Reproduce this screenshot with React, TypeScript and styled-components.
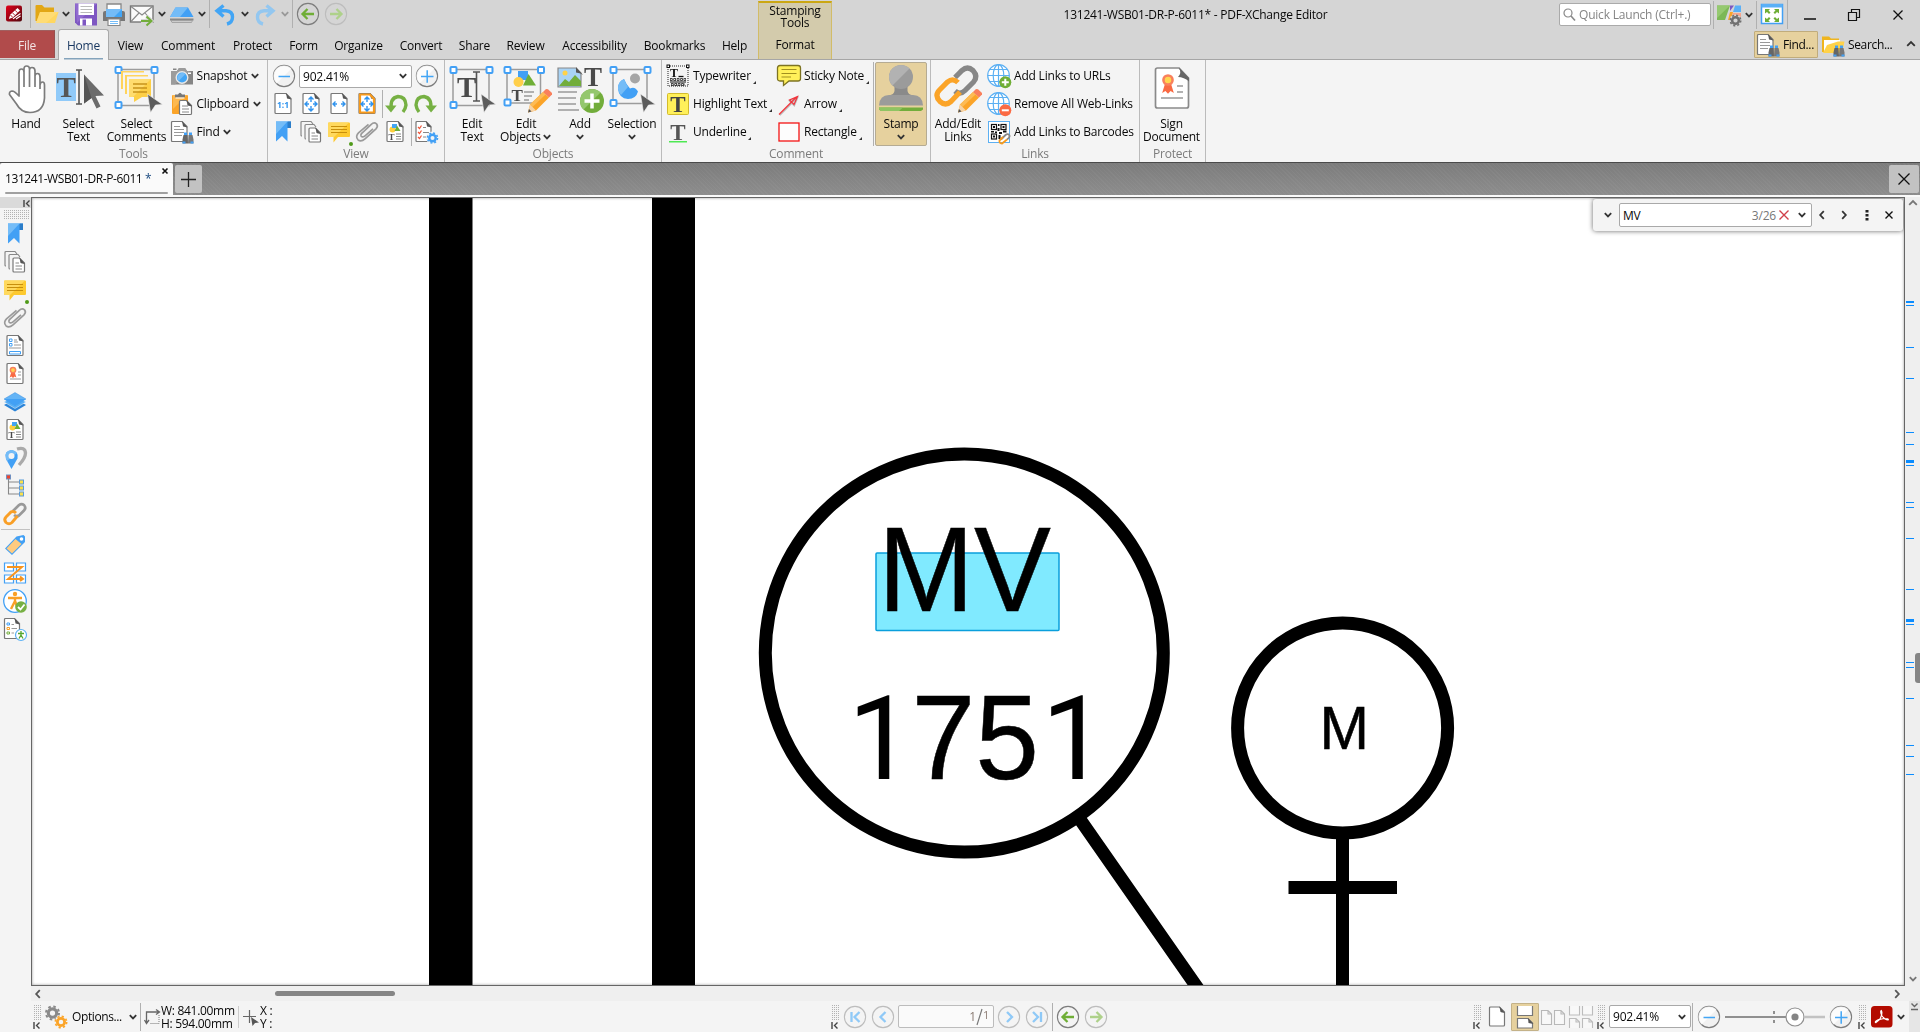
import React from "react";
import styled, { createGlobalStyle, css } from "styled-components";

const GlobalStyle = createGlobalStyle`
  *, *::before, *::after { box-sizing: border-box; }
  body { margin: 0; overflow: hidden; background: #f4f4f4; }
  #root {
    font-family: "Open Sans", "Noto Sans", sans-serif;
    font-size: 12px;
    line-height: 13px;
    letter-spacing: -0.2px;
    color: #080808;
  }
`;

/* ---------- shared parts ---------- */

const Window = styled.div`
  width: 1920px;
  height: 1032px;
  display: flex;
  flex-direction: column;
  background: #f4f4f4;
  white-space: nowrap;
  overflow: hidden;
`;

const Svg = styled.svg`
  display: block;
  flex: none;
  overflow: visible;
`;

const VRule = styled.i<{ $h?: number; $c?: string; $l?: number; $r?: number }>`
  flex: none;
  width: 1px;
  height: ${(p) => p.$h ?? 28}px;
  margin-left: ${(p) => p.$l ?? 0}px;
  margin-right: ${(p) => p.$r ?? 0}px;
  background: ${(p) => p.$c ?? "#b0b0b0"};
`;

const Spacer = styled.i<{ $w?: number }>`
  flex: ${(p) => (p.$w === undefined ? "1 1 0" : "none")};
  width: ${(p) => (p.$w === undefined ? "auto" : `${p.$w}px`)};
`;

type IconProps = { s?: number };

const I = ({ s = 24, w, h, children }: IconProps & { w?: number; h?: number; children: React.ReactNode }) => (
  <Svg width={w ?? s} height={h ?? s} viewBox={`0 0 ${w ?? s} ${h ?? s}`} fill="none">
    {children}
  </Svg>
);

const Chevron = ({ c = "#333", d = "down" }: { c?: string; d?: "down" | "up" | "left" | "right" }) => {
  const pts = {
    down: "1.8,3.2 5,6.4 8.2,3.2",
    up: "1.2,6.8 5,3 8.8,6.8",
    left: "6.8,1.2 3.2,5 6.8,8.8",
    right: "3.2,1.2 6.8,5 3.2,8.8",
  }[d];
  return (
    <I s={10}>
      <polyline points={pts} stroke={c} strokeWidth="1.8" />
    </I>
  );
};

const Cross = ({ s = 10, c = "#111", w = 1.4 }: { s?: number; c?: string; w?: number }) => (
  <I s={s}>
    <path d={`M0.5 0.5L${s - 0.5} ${s - 0.5}M${s - 0.5} 0.5L0.5 ${s - 0.5}`} stroke={c} strokeWidth={w} />
  </I>
);

/* ---------- 24px icons ---------- */

const PageShape = ({ x = 4, y = 1.5, w = 16, h = 20 }: { x?: number; y?: number; w?: number; h?: number }) => (
  <>
    <path
      d={`M${x + 1} ${y}H${x + w - 5}L${x + w} ${y + 5}V${y + h - 1}Q${x + w} ${y + h} ${x + w - 1} ${y + h}H${x + 1}Q${x} ${y + h} ${x} ${y + h - 1}V${y + 1}Q${x} ${y} ${x + 1} ${y}Z`}
      fill="#fff"
      stroke="#777"
      strokeWidth="1.2"
    />
    <path d={`M${x + w - 5} ${y - 0.5}L${x + w + 0.6} ${y + 6}L${x + w - 4} ${y + 5}Z`} fill="#555" />
  </>
);

const Glass = ({ x = 0, y = 0 }: { x?: number; y?: number }) => (
  <g transform={`translate(${x} ${y})`}>
    <rect x="1.5" y="0" width="3" height="3" fill="#42a0f5" />
    <rect x="6.5" y="0" width="3" height="3" fill="#42a0f5" />
    <path d="M1 2.5H5L5.5 11H0V7Z" fill="#666" />
    <path d="M6 2.5H10L11 7V11H5.5Z" fill="#777" />
    <rect x="0" y="9" width="3" height="2" fill="#42a0f5" />
    <rect x="8" y="9" width="3" height="2" fill="#42a0f5" />
  </g>
);

const LogoIcon = () => (
  <I>
    <defs>
      <linearGradient id="logo" x1="0" y1="0" x2="1" y2="1">
        <stop offset="0" stopColor="#e2001a" />
        <stop offset="1" stopColor="#50080e" />
      </linearGradient>
    </defs>
    <rect x="4" y="3.5" width="16" height="16" rx="2" fill="url(#logo)" />
    <path d="M6.800 17L8.200 12.800L15.500 6L18 8.600L10.800 15.500Z" fill="#fff" />
    <path d="M8.500 13L10.600 15.200M10.500 10.800L12.800 13.200M13.200 8.300L15.500 10.800" stroke="#a80c18" strokeWidth=".9" />
    <path d="M11 16.800L18.500 11.500M14 17L18.500 14" stroke="#fff" strokeWidth="1.100" />
  </I>
);
const FolderIcon = () => (
  <I>
    <path d="M1.5 4Q1.5 3 2.500 3H8L10.500 5.500H20V19H1.500Z" fill="#e2a716" />
    <path d="M2 21L6 10H24.500L21 21Z" fill="#ffd761" />
    <path d="M2 21L6 10H24.500L12 21Z" fill="#ffe082" opacity=".6" />
  </I>
);
const SaveIcon = () => (
  <I>
    <path d="M1 1.500H23V23.500H4L1 20.500Z" fill="#7e57c2" />
    <path d="M1 1.500H23L3 21Z" fill="#a47fdb" opacity=".5" />
    <rect x="4.500" y="1.500" width="15.500" height="11.500" fill="#fff" />
    <path d="M6.500 4.500H18M6.500 7.500H18M6.500 10.500H18" stroke="#bbb" />
    <rect x="6" y="16.500" width="12" height="7" fill="#fff" />
    <rect x="8.500" y="17.500" width="3.500" height="6" fill="#7e57c2" />
  </I>
);
const PrintIcon = () => (
  <I>
    <path d="M5 10V2H19V10" fill="#fff" stroke="#888" strokeWidth="1.300" />
    <path d="M3 9H21Q23 9 23 11V19H1V11Q1 9 3 9Z" fill="#777" />
    <path d="M4 7H20V15H4Z" fill="#42a5f5" />
    <path d="M4 7H20L12 15H4Z" fill="#74bcf7" />
    <path d="M6 17H18V23.500H6Z" fill="#fff" stroke="#888" strokeWidth="1.200" />
    <path d="M8 19.500H16M8 21.500H16" stroke="#74bcf7" />
  </I>
);
const MailIcon = () => (
  <I>
    <rect x=".5" y="4" width="22.500" height="16" fill="#fafafa" stroke="#777" strokeWidth="1.400" />
    <path d="M1 4.500L12 13L22.500 4.500M1 19.500L9 11M22.500 19.500L15 11" stroke="#888" strokeWidth="1.100" />
    <path d="M11 19H21M16.500 14.500L21.500 19L16.500 23.500" stroke="#d5d5d5" strokeWidth="4" />
    <path d="M11 19H21M16.500 14.500L21.500 19L16.500 23.500" stroke="#72ad3b" strokeWidth="2" />
  </I>
);
const ScannerIcon = () => (
  <I>
    <path d="M5.500 5.500H18L23.500 15H0Z" fill="#42a0f5" />
    <path d="M5.500 5.500H18L10 15H0Z" fill="#74bcf7" />
    <path d="M0 16.500H23.500V18.500H0Z" fill="#888" />
    <path d="M1 18.500H22.500L21.500 20.500H2Z" fill="#ccc" stroke="#999" strokeWidth=".8" />
  </I>
);
const UndoIcon = ({ flip, c }: { flip?: boolean; c: string }) => (
  <I>
    <g transform={flip ? "translate(24 0) scale(-1 1)" : undefined}>
      <path d="M10.500 3.500L4 8.800L10.500 14.500M4 8.800H13Q19.500 9.200 19.500 15Q19.500 20.500 14 22" stroke={c} strokeWidth="3.400" />
    </g>
  </I>
);
const RoundIcon = ({ kind, off, c }: { kind: "left" | "right" | "minus" | "plus" | "first" | "prev" | "next" | "last"; off?: boolean; c?: string }) => {
  const green = kind === "left" || kind === "right";
  const col = c ?? (green ? (off ? "#aed18a" : "#6fae36") : off ? "#8fc9f7" : "#42a5f5");
  const d = {
    left: "M6.500 12H18M11.500 7L6.500 12L11.500 17",
    right: "M6 12H17.500M12.500 7L17.500 12L12.500 17",
    minus: "M6.500 12.500H18",
    plus: "M6 12.500H18.500M12.200 6.200V18.700",
    first: "M8.500 7V17M16.500 7L11.500 12L16.500 17",
    prev: "M14.500 7L9.500 12L14.500 17",
    next: "M10 7L15 12L10 17",
    last: "M8 7L13 12L8 17M16 7V17",
  }[kind];
  return (
    <I>
      <circle cx="12" cy="12" r="10.600" fill={green || off ? "none" : "#f1f1f1"} stroke={off ? "#bdbdbd" : "#7d7d7d"} strokeWidth="1.100" />
      {!green && !off && <path d="M4.500 4.500A10.600 10.600 0 0 0 4.500 19.500L19.500 4.500A10.600 10.600 0 0 0 4.500 4.500Z" fill="#fff" opacity=".8" />}
      <path d={d} stroke={col} strokeWidth={kind === "minus" || kind === "plus" ? 1.5 : 2.3} />
    </I>
  );
};
const CameraIcon = () => (
  <I>
    <path d="M1 7H7L9 4H15L17 7H23V20.500H1Z" fill="#858585" />
    <path d="M1 7H7L9 4H15L17 7H20L5 20.500H1Z" fill="#9c9c9c" />
    <rect x="3" y="4.500" width="3.500" height="1.500" fill="#858585" />
    <rect x="18" y="8.500" width="3" height="1.500" fill="#fff" />
    <circle cx="12" cy="13.500" r="5.800" fill="#42a5f5" stroke="#e8e8e8" strokeWidth="1.400" />
    <path d="M8.500 17A5 5 0 0 1 15.500 10Z" fill="#74bcf7" />
  </I>
);
const ClipboardIcon = () => (
  <I>
    <rect x="2" y="3" width="16" height="19" rx="1" fill="#fba428" />
    <path d="M3 3H17L3 17Z" fill="#fdb94f" />
    <path d="M5 2.500H8Q10 -1 12 2.500H15V5.500H5Z" fill="#777" />
    <rect x="5.500" y="5.500" width="9" height="1" fill="#fff" />
    <PageShape x={9.5} y={8.5} w={12} h={14} />
    <path d="M12 14H18M12 17H19M12 20H19" stroke="#888" />
  </I>
);
const FindIcon = () => (
  <I>
    <PageShape x={1.5} y={1.5} w={15.500} h={20} />
    <path d="M4 6.500H10M4 9.500H14M4 12.500H14M4 15.500H12" stroke="#999" />
    <Glass x={12.500} y={12.500} />
  </I>
);
const SearchFolderIcon = () => (
  <I>
    <path d="M1 3.500H8L10 5.500H18V19H1Z" fill="#efb51f" />
    <path d="M3 7H19V18H3Z" fill="#fff" />
    <path d="M2 20L6 12L17 8.500H23.500L21 20Z" fill="#ffd24a" />
    <Glass x={12.500} y={12.500} />
  </I>
);

const Arrows4 = ({ v = true }: { v?: boolean }) => (
  <path
    d={`M8.500 9.500L6 12L8.500 14.500M15.500 9.500L18 12L15.500 14.500M6 12H10M14 12H18${v ? "M9.500 7.500L12 5L14.500 7.500M9.500 16.500L12 19L14.500 16.500M12 5V10M12 14V19" : ""}`}
    stroke="#2f93ee"
    strokeWidth="1.400"
  />
);
const TinyText = styled.text<{ $size: number; $bold?: boolean; $serif?: boolean; $fill?: string }>`
  font-family: ${(p) => (p.$serif ? '"Liberation Serif", serif' : '"Open Sans", sans-serif')};
  font-size: ${(p) => p.$size}px;
  font-weight: ${(p) => (p.$bold ? 700 : 400)};
  fill: ${(p) => p.$fill ?? "#4a4a4a"};
  letter-spacing: 0;
`;
const ActualSizeIcon = () => (
  <I>
    <PageShape />
    <TinyText x="6" y="15.500" $size={8.5} $bold $fill="#2f93ee">1:1</TinyText>
  </I>
);
const FitPageIcon = () => (<I><PageShape /><Arrows4 /></I>);
const FitWidthIcon = () => (<I><PageShape /><Arrows4 v={false} /></I>);
const FitVisibleIcon = () => (
  <I>
    <PageShape />
    <path d="M5 2.500H15L19 7V20.500H5Z" stroke="#f79a1c" strokeWidth="2.200" />
    <Arrows4 />
  </I>
);
const RotateIcon = ({ flip }: { flip?: boolean }) => (
  <I>
    <g transform={flip ? "translate(24 0) scale(-1 1)" : undefined}>
      <path d="M6.500 17.500Q4.500 6 13 4.500Q20.500 4.500 21 13Q20.500 17 18 20" stroke="#76b043" strokeWidth="3.400" />
      <path d="M0 13.500H11.500L6 20.500Z" fill="#76b043" />
    </g>
  </I>
);
const BookmarkIcon = () => (
  <I>
    <path d="M5 1.500H20V8H16.500V21.500L11 16L5 21.500Z" fill="#42a0f5" />
    <path d="M16.500 1.500H20V8H16.500Z" fill="#2b7dc9" />
    <path d="M5 1.500H16.500L5 14Z" fill="#74bcf7" />
  </I>
);
const PagesIcon = () => (
  <I>
    <path d="M3 16Q2 16 2 15V2.500Q2 1.500 3 1.500H12L14 4M7 19Q6 19 6 18V5.500Q6 4.500 7 4.500H15L17 7" stroke="#888" strokeWidth="1.200" />
    <PageShape x={10} y={8} w={11.500} h={14} />
    <path d="M12.500 13H16M12.500 16H19M12.500 19H19" stroke="#888" />
  </I>
);
const NoteIcon = () => (
  <I>
    <path d="M1 3.500Q1 2.500 2 2.500H22Q23 2.500 23 3.500V16Q23 17 22 17H11L6.500 22.500V17H2Q1 17 1 16Z" fill="#fdc92f" />
    <path d="M1 3.500Q1 2.500 2 2.500H22L7 17H2Q1 17 1 16Z" fill="#ffd95e" />
    <path d="M4 6.500H20M4 9.500H20M4 12.500H20" stroke="#c78f0c" strokeWidth="1.100" />
    <circle cx="24" cy="24" r="2" fill="#4f9a18" />
  </I>
);
const ClipIcon = () => (
  <I>
    <path
      d="M18 9L9.500 16.500Q7 18 6 16Q5.500 14.500 7 13.200L16 4.800Q19 2 21.500 4Q23.500 6.500 21 9L10 19Q6 22.500 3 20Q0 16.500 3.500 13L13.500 4.500"
      stroke="#9a9a9a"
      strokeWidth="1.700"
      transform="translate(0 -.2)"
    />
  </I>
);
const ContentIcon = () => (
  <I>
    <PageShape />
    <circle cx="9.500" cy="9.500" r="3" fill="#fdcf3f" />
    <rect x="9" y="4" width="5" height="4" fill="#42a5f5" />
    <path d="M14 5.500L17.500 11H11.500Z" fill="#6fae36" />
    <TinyText x="5.500" y="19.500" $size={9} $bold $serif>T</TinyText>
    <path d="M13 14H18M13 16.500H18M13 19H18" stroke="#888" />
  </I>
);
const Gear = ({ cx, cy, r, c }: { cx: number; cy: number; r: number; c: string }) => (
  <g>
    <circle cx={cx} cy={cy} r={r * 0.56} stroke={c} strokeWidth={r * 0.42} fill="none" />
    <circle cx={cx} cy={cy} r={r * 0.87} stroke={c} strokeWidth={r * 0.26} strokeDasharray={`${r * 0.3416} ${r * 0.3416}`} fill="none" />
  </g>
);
const ViewSettingsIcon = () => (
  <I>
    <PageShape x={2} y={1.5} w={15} h={20} />
    <path d="M4 7L5.500 8.500L7.500 5.500M4 12L5.500 13.500L7.500 10.500M4 17L5.500 18.500L7.500 15.500" stroke="#f0563a" strokeWidth="1.200" />
    <path d="M9 7.500H12M9 12.500H15M9 17H12" stroke="#888" />
    <circle cx="18.500" cy="18" r="6.500" fill="#f4f4f4" />
    <Gear cx={18.5} cy={18} r={5.8} c="#42a0f5" />
  </I>
);
const TypewriterIcon = () => (
  <I>
    <rect x="2" y="2" width="20" height="20" stroke="#222" strokeWidth="1" strokeDasharray="1 1" />
    <rect x="1" y="1" width="2.500" height="2.500" fill="#fff" stroke="#111" />
    <rect x="20.500" y="1" width="2.500" height="2.500" fill="#fff" stroke="#111" />
    <TinyText x="4" y="13" $size={12} $bold $serif $fill="#111">T</TinyText>
    <path d="M12.500 12.500H17.500" stroke="#111" strokeWidth="1.300" />
    <path d="M4 15.500H20M5 20.500H19" stroke="#111" strokeWidth="2.600" strokeDasharray="2.600 .8" />
    <path d="M4.600 15.500H19.500M5.600 20.500H18.500" stroke="#fff" strokeWidth=".9" strokeDasharray="1.300 2.100" />
    <path d="M4 18H20" stroke="#111" strokeWidth="1" />
  </I>
);
const HighlightIcon = () => (
  <I>
    <rect x="1.500" y="1.500" width="21" height="21" rx="1" fill="#fff05a" stroke="#d3bb2c" />
    <TinyText x="4.300" y="19.500" $size={23} $bold $serif $fill="#444">T</TinyText>
  </I>
);
const UnderlineIcon = () => (
  <I>
    <TinyText x="4.300" y="19.500" $size={23} $bold $serif $fill="#555">T</TinyText>
    <path d="M3 21.800H21" stroke="#25e62b" strokeWidth="1.200" />
  </I>
);
const StickyIcon = () => (
  <I>
    <path d="M3 1.500H21Q23.500 1.500 23.500 4V14.500Q23.500 17 21 17H12L6.500 21.500V17H3Q.5 17 .5 14.500V4Q.5 1.500 3 1.500Z" fill="#fff05a" stroke="#7d7322" strokeWidth="1.300" />
    <path d="M4.500 5.500H19.500M4.500 9.500H19.500M4.500 13H14" stroke="#a08f1e" />
  </I>
);
const ArrowIcon = () => (
  <I>
    <path d="M2 22.500L20 4.500M20 4.500L11.500 8L16.500 13Z" stroke="#bbb" strokeWidth="1.400" transform="translate(.8 .8)" />
    <path d="M2 22.500L19.500 5M20.500 4.500L12.500 8L17 12.500Z" stroke="#f2323a" strokeWidth="1.200" />
  </I>
);
const RectIcon = () => (
  <I><rect x="2" y="3" width="20" height="18" fill="#fdfdfd" stroke="#f51414" strokeWidth="1.300" /></I>
);
const Globe = () => (
  <>
    <circle cx="11.500" cy="11.500" r="10.800" fill="#fff" />
    <g stroke="#5cb0f3" strokeWidth="1.200">
      <circle cx="11.500" cy="11.500" r="10.800" />
      <ellipse cx="11.500" cy="11.500" rx="5.300" ry="10.800" />
      <path d="M11.500 .7V22.300M.7 11.500H22.300M2.500 5.500H20.500M2.500 17.500H20.500" />
    </g>
  </>
);
const GlobeAddIcon = () => (
  <I>
    <Globe />
    <circle cx="18.300" cy="18.300" r="6" fill="#6fae36" />
    <path d="M18.300 14.800V21.800M14.800 18.300H21.800" stroke="#fff" strokeWidth="2" />
  </I>
);
const GlobeRemoveIcon = () => (
  <I>
    <Globe />
    <circle cx="18.300" cy="18.300" r="6" fill="#fb6a43" />
    <path d="M14.800 18.300H21.800" stroke="#fff" strokeWidth="2" />
  </I>
);
const QrIcon = () => (
  <I>
    <rect x="1.500" y="1.500" width="21" height="21" fill="#fff" stroke="#5cb0f3" />
    <g stroke="#111" strokeWidth="1.200">
      <rect x="4.500" y="4.500" width="5" height="5" />
      <rect x="14" y="4.500" width="5" height="5" />
      <rect x="4.500" y="14" width="5" height="5" />
    </g>
    <g fill="#111">
      <path d="M6 6h2v2h-2zM15.500 6h2v2h-2zM6 15.500h2v2h-2zM11 4h1.500v2h-1.500zM10.500 8h2v3h-2zM4 11h3v1.500h-3zM8 11.500h2v1.500h-2zM12 12h3v2h-3zM16 10.500h3.500v2h-3.500zM11.500 15h2v4h-2z" />
    </g>
    <path d="M14 19.500L18.500 15Q21 13 22.500 15.500Q23 17.500 20 19.500" stroke="#888" strokeWidth="1.800" />
    <path d="M16 17L12.500 20.500Q12 23.500 15 23.500L20 19.500" stroke="#f79a1c" strokeWidth="1.800" />
  </I>
);
const LinkIcon = () => (
  <I>
    <path d="M10 9L16 3Q18.500 1.200 21 3Q23.500 6 21 8.500L16 13.500Q13.500 15 11 13" stroke="#999" strokeWidth="2.700" />
    <path d="M14.500 14L9 20.500Q6 23 3 20.500Q.5 17.500 3 15L8 10Q10.500 8.500 13 11" stroke="#f99f26" strokeWidth="2.900" />
  </I>
);
const FieldsIcon = () => (
  <I>
    <PageShape />
    <path d="M6.500 5H9V7.500H6.500ZM6.500 9.500H9V12H6.500ZM6.500 17.500H17.500V20H6.500Z" stroke="#42a0f5" />
    <path d="M11 6H14M11 8H15M11 11H18M6 14H18" stroke="#999" />
  </I>
);
const Rosette = ({ x, y, k = 1 }: { x: number; y: number; k?: number }) => (
  <g transform={`translate(${x} ${y}) scale(${k})`}>
    <path d="M-2 2L-4.500 10L-2 8.500L0 10.500L2 8.500L4.500 10L2 2Z" fill="#f96a43" />
    <circle r="3.500" fill="#ffd54f" stroke="#f9805c" strokeWidth="2" />
  </g>
);
const SignatureIcon = () => (
  <I>
    <PageShape />
    <Rosette x={10} y={8} k={0.75} />
    <path d="M15 10H18M15 13H18M7 17H18" stroke="#999" />
  </I>
);
const LayersIcon = () => (
  <I>
    <path d="M12 9L23 15L12 21.500L1 15Z" fill="#2b84d8" />
    <path d="M12 6L23 12L12 18.500L1 12Z" fill="#55aef7" stroke="#f4f4f4" strokeWidth=".5" />
    <path d="M12 2.500L23 9L12 15.500L1 9Z" fill="#64b4f6" stroke="#2b84d8" strokeWidth=".4" />
    <path d="M23 9L12 15.500L1 9Z" fill="#42a0f5" />
  </I>
);
const PinsIcon = () => (
  <I>
    <path d="M14 3Q22 .5 22.500 7Q22.500 12 16 19" stroke="#aaa" strokeWidth="3.300" />
    <path d="M8.500 23L3 13Q.5 5 8.500 4Q16 5 14.500 12.500Z" fill="#42a0f5" />
    <path d="M3 13Q.5 5 8.500 4Q12 4.500 14 7L4 15Z" fill="#74bcf7" />
    <circle cx="8.500" cy="10" r="3" fill="#f4f4f4" />
  </I>
);
const TreeIcon = () => (
  <I>
    <path d="M5.500 4V20H18M5.500 8H18M5.500 14H18" stroke="#888" strokeWidth="1.100" />
    <rect x="3.500" y="1" width="4" height="4" fill="#f0442c" stroke="#6f8fc0" />
    {[6, 12, 18].map((y) => (
      <rect key={y} x="16.500" y={y} width="4" height="4" fill="#fce04a" stroke="#5b9bd8" />
    ))}
  </I>
);
const TagIcon = () => (
  <I>
    <path d="M2 15.500L13.500 3.500L20.500 2L22 3.500V9L9 22Z" fill="#42a0f5" />
    <path d="M3.500 15.500L12.500 6L18.500 11L9 20.500Z" fill="#ffcb80" />
    <circle cx="18.500" cy="6" r="1.800" fill="#fff" />
  </I>
);
const OrderIcon = () => (
  <I>
    <g fill="#fff" stroke="#42a0f5" strokeWidth="1.200">
      <path d="M1.500 2H10.500V10H1.500ZM13.500 2H22.500V10H13.500ZM1.500 14H10.500V22H1.500ZM13.500 14H22.500V22H13.500Z" />
    </g>
    <path d="M4 6H19L5 18H20M17 15.500L20 18L17 20" stroke="#f7941d" strokeWidth="1.900" />
  </I>
);
const AccessIcon = () => (
  <I>
    <circle cx="12" cy="12" r="11.300" fill="#fff" stroke="#42a0f5" strokeWidth="1.300" />
    <circle cx="12" cy="5" r="2.200" fill="#f99f26" />
    <path d="M5 9H19M12 9V14M12 12L8 20M12 12L15 20" stroke="#f99f26" strokeWidth="2.400" />
    <circle cx="18" cy="18" r="5.800" fill="#76b043" />
    <path d="M15 18L17.500 20.500L21.500 15.500" stroke="#fff" strokeWidth="1.800" />
  </I>
);
const AccessReportIcon = () => (
  <I>
    <PageShape x={1.500} y={1.500} w={15} h={20} />
    <path d="M4 6H6.500V8H4Z" stroke="#42a0f5" />
    <path d="M4 10.500H6.500V12.500H4Z" stroke="#f99f26" />
    <path d="M4 15H6.500V17H4Z" stroke="#76b043" />
    <path d="M8.500 7.500H11M8.500 11.500H14M8.500 16H11" stroke="#999" />
    <circle cx="18" cy="18" r="5.500" fill="#fff" stroke="#5cb0f3" strokeWidth="1.200" />
    <path d="M15 16.500H21M18 14V18L16 21.500M18 18L20 21.500" stroke="#55a630" strokeWidth="1.300" />
  </I>
);
const UiOptionsIcon = () => (
  <I>
    <path d="M0 2.500H13L8 17H0Z" fill="#7cb855" />
    <path d="M0 2.500H13L0 15Z" fill="#95c970" />
    <path d="M13 2.500H17L13 8Z" fill="#7e57c2" />
    <path d="M18 2.500H24V9H16Z" fill="#5ab0f7" />
    <path d="M13 9L11 17H14L16 9Z" fill="#fba428" />
    <path d="M16 10H24V17H15Z" fill="#f9a58c" />
    <circle cx="18.500" cy="17.500" r="6" fill="#d5d5d5" />
    <Gear cx={18.500} cy={17.500} r={6} c="#707070" />
  </I>
);
const FullscreenIcon = () => (
  <I>
    <rect x="1.500" y="1.500" width="21" height="19" fill="#fff" stroke="#42a0f5" strokeWidth="1.500" />
    <rect x="1.500" y="1" width="21" height="3.500" fill="#5ab0f7" />
    <g fill="#6fae36">
      <path d="M5 6H10L8.500 7.500L10.500 9.500L9 11L7 9L5 10.500ZM19 6H14L15.500 7.500L13.500 9.500L15 11L17 9L19 10.500ZM5 19H10L8.500 17.500L10.500 15.500L9 14L7 16L5 14.500ZM19 19H14L15.500 17.500L13.500 15.500L15 14L17 16L19 14.500Z" />
    </g>
  </I>
);

/* ---------- large ribbon icons ---------- */

const Corners = ({ s = 36 }: { s?: number }) => (
  <>
    <path d={`M5 4.500H${5 + s}V${4.500 + s}H5Z`} stroke="#9c9c9c" strokeWidth="1.500" fill="none" />
    {[[5, 4.500], [5 + s, 4.500], [5, 4.500 + s - 1]].map(([x, y], i) => (
      <rect key={i} x={x - 2.500} y={y - 2.500} width="6" height="6" rx="1" fill="#fff" stroke="#42a0f5" strokeWidth="2" />
    ))}
  </>
);
const Pointer = ({ x, y, k = 1 }: { x: number; y: number; k?: number }) => (
  <g transform={`translate(${x} ${y}) scale(${k})`}>
    <path d="M0 0L20 21L11.500 21.500L16.500 32L12.500 34L7.500 23.500L0 29Z" fill="#6b6b6b" />
    <path d="M0 0L7.500 23.500L0 29Z" fill="#555" />
  </g>
);
const SmallPointer = ({ x, y }: { x: number; y: number }) => (
  <path transform={`translate(${x} ${y})`} d="M0 0L15 10.500L8 11L3 18.500Z" fill="#5c5c5c" stroke="#f4f4f4" strokeWidth=".6" />
);
const Pencil = ({ x, y }: { x: number; y: number }) => (
  <g transform={`translate(${x} ${y})`}>
    <path d="M0 23.500L2 15.500L15 3L21 8.500L8 21.500Z" fill="#fba428" />
    <path d="M2 15.500L15 3L17.500 5.500L4.500 18Z" fill="#fdbb55" />
    <path d="M15 3L18 0L20 .2L24 4L24 5.500L21 8.500Z" fill="#f9805c" />
    <path d="M0 23.500L2 15.500L8 21.500Z" fill="#f7d3a5" />
    <path d="M0 23.500L1 20L3.500 22.500Z" fill="#555" />
  </g>
);
const HandIcon = () => (
  <I s={48}>
    <path
      d="M17 27.500V7Q17 4 19.500 4Q22 4 22 7V4Q22 1 24.600 1Q27.500 1 27.500 4V5Q27.500 2.500 30 2.500Q33 2.500 33 6V11Q33 8.500 35.500 8.500Q38 8.500 38 12V20Q38.500 17 40.500 17Q42.500 17 42.500 20V33Q41.500 47.500 28 47.500Q19 47.500 14.500 39L7.500 29.500Q7 26.500 10 26Q12.500 26 17 31ZM22 7V22M27.500 5V22M33 10V22M38 19V24"
      fill="#fff"
      stroke="#7c7c7c"
      strokeWidth="1.700"
      strokeLinejoin="round"
    />
  </I>
);
const SelectTextIcon = () => (
  <I s={48}>
    <rect x="1" y="8" width="20" height="28" fill="#90caf9" />
    <TinyText x="1.500" y="32" $size={29} $bold $serif $fill="#555">T</TinyText>
    <path d="M21 5H27M21 39H27M24 5V39" stroke="#555" strokeWidth="1.600" />
    <Pointer x={29} y={9.500} />
  </I>
);
const SelectCommentsIcon = () => (
  <I s={48}>
    <Corners s={36} />
    <path d="M8 24V6H31V7.500H10V24Z" fill="#ffd45c" />
    <path d="M12 29V10H35V11.500H14V29Z" fill="#ffd45c" />
    <path d="M16 14H38V32H29L21 37V32H16Z" fill="#fdcf46" />
    <path d="M16 14H38L20 32H16Z" fill="#ffdc6e" />
    <path d="M20 19H34M20 23H34M20 27H34" stroke="#c7931b" strokeWidth="1.300" />
    <SmallPointer x={34.500} y={29} />
  </I>
);
const EditTextIcon = () => (
  <I s={48}>
    <Corners s={36} />
    <TinyText x="9" y="32" $size={29} $serif $bold>T</TinyText>
    <path d="M25 7H32M25 36H32M28.500 7V36" stroke="#555" strokeWidth="1.600" />
    <SmallPointer x={33} y={29} />
  </I>
);
const EditObjectsIcon = () => (
  <I s={48}>
    <Corners s={33.500} />
    <rect x="16" y="6" width="10" height="9" fill="#42a0f5" />
    <path d="M26.500 9L34 20.500H21Z" fill="#6fae36" />
    <circle cx="16.500" cy="17" r="5" fill="#ffcf4a" />
    <TinyText x="9.500" y="36" $size={17} $serif $bold>T</TinyText>
    <path d="M22 27H32M22 31H30M22 35H27" stroke="#999" strokeWidth="1.400" />
    <Pencil x={26} y={24} />
  </I>
);
const AddIcon = () => (
  <I s={48}>
    <path d="M3 3H20L25 8V22H2V3Z" fill="#a8d3f5" stroke="#888" strokeWidth="1.200" />
    <path d="M20 2L27 10L24.500 8.500L20 7.500Z" fill="#555" />
    <circle cx="9" cy="8" r="2.500" fill="#ffd24a" />
    <path d="M3 21L9 14L13 17L19 10L25 16V21Z" fill="#72ad3b" />
    <TinyText x="28" y="20.500" $size={27} $serif $bold>T</TinyText>
    <path d="M2 27H21M2 33H20M2 39H20M2 45H23" stroke="#999" strokeWidth="1.400" />
    <circle cx="36" cy="36" r="12" fill="#72ad3b" />
    <path d="M27.500 44.500A12 12 0 0 1 44.500 27.500Z" fill="#94c76d" />
    <path d="M36 28.500V43.500M28.500 36H43.500" stroke="#fff" strokeWidth="3.500" />
  </I>
);
const SelectionIcon = () => (
  <I s={48}>
    <Corners s={34} />
    <circle cx="27" cy="13.500" r="5" fill="#a5a5a5" />
    <path d="M16 14Q9.500 17 10 24Q11 33.500 20 34Q28 34 30 26.500Q27 21 22 23.500Q18 19 16 14Z" fill="#42a0f5" />
    <path d="M16 14Q9.500 17 10 24Q11 28 13 30L20 22Q18 19 16 14Z" fill="#74bcf7" />
    <SmallPointer x={32.500} y={29} />
  </I>
);
const StampIcon = () => (
  <I s={48}>
    <path d="M17.500 20H30.500V26Q31 29.500 36 30.500H12Q17 29.500 17.500 26Z" fill="#8a8a8a" />
    <circle cx="24" cy="12" r="12" fill="#9b9b9b" />
    <path d="M15.500 20.500A12 12 0 0 1 32.500 3.500Z" fill="#b2b2b2" />
    <path d="M2 40.500Q2.500 30 12 30H36Q45.500 30 46 40.500Z" fill="#9b9b9b" />
    <path d="M2 42.500H46V44.500L44 46H4L2 44.500Z" fill="#72ad3b" />
    <path d="M2 42.500H26L22 46H4L2 44.500Z" fill="#8fc463" />
  </I>
);
const BigLinkIcon = () => (
  <I s={48}>
    <path d="M22 12L29 5Q34.500 0 40 5Q45.500 11 40.500 16.500L32 25Q27 30 22 25.500" stroke="#878787" strokeWidth="5.200" transform="translate(-1 .5)" />
    <path d="M26 27L17 36.500Q11.500 41.500 6 36.500Q0 30.500 5.500 25L13.500 17Q19 12.500 24 17.500" stroke="#fba428" strokeWidth="5.200" />
    <Pencil x={24} y={24} />
  </I>
);
const SignIcon = () => (
  <I s={48}>
    <path d="M9.500 3H31L40.500 13V41Q40.500 43 38.500 43H9.500Q7.500 43 7.500 41V5Q7.500 3 9.500 3Z" fill="#fff" stroke="#8a8a8a" strokeWidth="1.700" />
    <path d="M31 2.500Q34 8 30 12Q36 12 41 16.500V13Z" fill="#666" />
    <Rosette x={20} y={15} k={1.300} />
    <path d="M29 21H35M29 27H35M13 33H35" stroke="#999" strokeWidth="1.500" />
  </I>
);

/* ---------- title bar & ribbon tabs ---------- */

const Top = styled.header`
  flex: none;
  height: 60px;
  display: flex;
  background: #d5d5d5;
  border-bottom: 1px solid #a6a6a6;
`;
const TopLeft = styled.div`
  width: 758px;
  display: flex;
  flex-direction: column;
`;
const QuickBar = styled.div`
  height: 29px;
  display: flex;
  align-items: center;
  padding-left: 2px;
`;
const TabRow = styled.nav`
  height: 31px;
  display: flex;
  align-items: stretch;
`;
const Tab = styled.div<{ $w: number; $kind?: "file" | "active" }>`
  width: ${(p) => p.$w}px;
  display: flex;
  justify-content: center;
  align-items: center;
  padding-top: 3px;
  ${(p) =>
    p.$kind === "file" &&
    css`
      margin: 1px 3px 1px 0;
      padding-top: 2px;
      color: #f3e4e4;
      background: #b14b4b;
      border-right: 1px solid #96504f;
      border-top: 1px solid #a06060;
    `}
  ${(p) =>
    p.$kind === "active" &&
    css`
      color: #17365f;
      background: linear-gradient(#84a3bb, #84a3bb) 50% 28px / 39px 1.500px no-repeat #f4f4f4;
      border: 1px solid #aaa;
      border-bottom: 0;
      border-radius: 3px 3px 0 0;
      padding-top: 2px;
      margin-bottom: -1px;
      padding-bottom: 1px;
    `}
`;
const ContextTab = styled.div`
  width: 74px;
  margin-top: 1px;
  border: 1px solid #d2bc68;
  border-top: 2px solid #cba713;
  border-bottom: 0;
  background: #d3cbac;
  display: flex;
  flex-direction: column;
  align-items: center;
  text-align: center;
  line-height: 12px;
  padding-top: 2px;
`;
const ContextName = styled.span`
  width: 60px;
  white-space: normal;
  height: 34px;
`;
const TitleText = styled.div`
  width: 727px;
  padding: 8px 0 0 0;
  text-align: center;
  letter-spacing: -0.25px;
`;
const TopRight = styled.div`
  width: 361px;
  display: flex;
  flex-direction: column;
`;
const TopRightRow = styled.div<{ $second?: boolean }>`
  height: ${(p) => (p.$second ? 30 : 29)}px;
  display: flex;
  align-items: center;
`;
const QuickLaunch = styled.div`
  width: 152px;
  height: 23px;
  background: #fff;
  border: 1px solid #aaa;
  border-radius: 2px;
  display: flex;
  align-items: center;
  gap: 4px;
  padding-left: 3px;
  color: #858585;
`;
const FindButton = styled.div<{ $on?: boolean; $w: number }>`
  width: ${(p) => p.$w}px;
  height: 27px;
  display: flex;
  align-items: center;
  gap: 3px;
  padding-left: 1px;
  margin-top: 1px;
  letter-spacing: -0.35px;
  background: ${(p) => (p.$on ? "#e6d19e" : "transparent")};
  border: 1px solid ${(p) => (p.$on ? "#c0ac7c" : "transparent")};
  border-radius: 1px;
`;

/* ---------- ribbon ---------- */

const Ribbon = styled.section`
  flex: none;
  height: 103px;
  display: flex;
  background: #f4f4f4;
  border-bottom: 1px solid #4a4a4a;
`;
const Group = styled.div<{ $w: number }>`
  width: ${(p) => p.$w}px;
  border-right: 1px solid #bbb;
  display: flex;
  flex-direction: column;
  padding-top: 2px;
`;
const GroupBody = styled.div`
  height: 84px;
  display: flex;
`;
const GroupName = styled.div`
  height: 16px;
  line-height: 15px;
  text-align: center;
  color: #7b7b7b;
`;
const Big = styled.button<{ $w: number; $on?: boolean }>`
  all: unset;
  box-sizing: border-box;
  flex: none;
  width: ${(p) => p.$w}px;
  height: 84px;
  padding-top: ${(p) => (p.$on ? 2 : 3)}px;
  display: flex;
  flex-direction: column;
  align-items: center;
  border-radius: 2px;
  background: ${(p) => (p.$on ? "#e6d19e" : "transparent")};
  border: ${(p) => (p.$on ? "1px solid #b5ab93" : "0")};
`;
const BigLabel = styled.span`
  display: flex;
  flex-direction: column;
  align-items: center;
  margin-top: 4px;
`;
const BigLine = styled.span`
  height: 13px;
  display: flex;
  align-items: center;
  gap: 1px;
`;
const Column = styled.div<{ $w?: number; $l?: number }>`
  display: flex;
  flex-direction: column;
  flex: none;
  width: ${(p) => (p.$w ? `${p.$w}px` : "auto")};
  margin-left: ${(p) => p.$l ?? 0}px;
`;
const Small = styled.button<{ $gap: number }>`
  all: unset;
  height: 28px;
  display: flex;
  align-items: center;
  gap: ${(p) => p.$gap}px;
`;
const SmallLabel = styled.span`
  margin-bottom: 2px;
`;
const Corner = styled.i`
  width: 0;
  height: 0;
  margin: 12px 0 0 -1px;
  border-left: 3px solid transparent;
  border-bottom: 3px solid #333;
`;
const IconRow = styled.div<{ $l?: number; $gap?: number }>`
  height: 28px;
  display: flex;
  align-items: center;
  gap: ${(p) => p.$gap ?? 4}px;
  margin-left: ${(p) => p.$l ?? 0}px;
`;
const Combo = styled.div<{ $w: number; $l?: number }>`
  width: ${(p) => p.$w}px;
  height: 23px;
  margin-left: ${(p) => p.$l ?? 0}px;
  display: flex;
  align-items: center;
  justify-content: space-between;
  padding: 0 3px;
  background: #fff;
  border: 1px solid #a9a9a9;
  border-radius: 2px;
`;

const BigButton = ({ w, icon, lines, arrow, on }: { w: number; icon: React.ReactNode; lines: string[]; arrow?: "inline" | "below"; on?: boolean }) => (
  <Big $w={w} $on={on}>
    {icon}
    <BigLabel>
      {lines.map((l, i) => (
        <BigLine key={l}>
          {l}
          {arrow === "inline" && i === lines.length - 1 && <Chevron />}
        </BigLine>
      ))}
      {arrow === "below" && <BigLine><Chevron /></BigLine>}
    </BigLabel>
  </Big>
);
const SmallButton = ({ icon, label, arrow, corner }: { icon: React.ReactNode; label: string; arrow?: boolean; corner?: boolean }) => (
  <Small $gap={arrow ? 2.5 : 3}>
    {icon}
    <SmallLabel>{label}</SmallLabel>
    {arrow && <Chevron />}
    {corner && <Corner />}
  </Small>
);

/* ---------- document tabs ---------- */

const DocTabs = styled.div`
  flex: none;
  height: 34px;
  display: flex;
  background: repeating-linear-gradient(45deg, rgba(255, 255, 255, 0.03) 0 1px, transparent 1px 3px),
    linear-gradient(#7c7c7c, #8d8d8d);
  border-bottom: 2px solid #fafafa;
`;
const DocTab = styled.div`
  width: 173px;
  display: flex;
  flex-direction: column;
  background: #fafafa;
  border-radius: 2px 2px 0 0;
  padding: 0 5px;
`;
const DocTabTitle = styled.div`
  height: 29px;
  display: flex;
  justify-content: space-between;
  padding: 9px 0 0 0;
  letter-spacing: -0.42px;
  svg { margin-top: -4px; }
`;
const Dirty = styled.b`
  font-weight: 400;
  color: #1a4a80;
`;
const DocTabBar = styled.i`
  height: 2px;
  border-radius: 1px;
  background: #a0a0a0;
`;
const TabButton = styled.div<{ $w: number; $r?: number }>`
  width: ${(p) => p.$w}px;
  height: 28px;
  margin: 2px ${(p) => p.$r ?? 2}px 2px 2px;
  display: flex;
  align-items: center;
  justify-content: center;
  background: #c2c2c2;
  border-radius: 2px;
`;

/* ---------- work area ---------- */

const Work = styled.div`
  flex: none;
  height: 835px;
  display: flex;
`;
const Sidebar = styled.aside`
  width: 31px;
  display: flex;
  flex-direction: column;
  align-items: center;
`;
const SidebarHead = styled.div`
  flex: none;
  width: 31px;
  height: 11px;
  margin-bottom: 2px;
  background: #dadada;
  display: flex;
  justify-content: flex-end;
  align-items: center;
  padding: 2px 1px 0 0;
`;
const SidebarIcon = styled.div`
  flex: none;
  width: 29px;
  height: 28px;
  margin-right: 2px;
  display: flex;
  align-items: center;
  justify-content: center;
`;
const SidebarRule = styled.i`
  width: 29px;
  height: 1px;
  margin: 1px 0 1px;
  background: #c2c2c2;
`;
const Dots = styled.i<{ $w: number; $h: number }>`
  display: block;
  flex: none;
  width: ${(p) => p.$w}px;
  height: ${(p) => p.$h}px;
  background: conic-gradient(#b2b2b2 90deg, transparent 0) 0 0 / 2px 2px;
`;
const Main = styled.div`
  width: 1889px;
  display: flex;
  flex-direction: column;
`;
const ViewRow = styled.div`
  height: 789px;
  display: flex;
`;
const Canvas = styled.div`
  position: relative;
  width: 1874px;
  height: 789px;
  background: #fff;
  border: 1px solid #666;
  overflow: hidden;
  box-shadow: inset 0 0 3px rgba(0, 0, 0, 0.4);
`;
const Drawing = styled.svg`
  display: block;
  mix-blend-mode: multiply;
`;
const DrawingText = styled.text<{ $size: number; $alt?: boolean }>`
  font-family: ${(p) => (p.$alt ? "Roboto, sans-serif" : '"Liberation Sans", Arial, sans-serif')};
  font-size: ${(p) => p.$size}px;
  letter-spacing: 0;
  fill: #000;
  stroke: #000;
  stroke-width: ${(p) => (p.$alt ? 0 : 0.5)}px;
`;
const FindBar = styled.div`
  position: absolute;
  right: 1px;
  top: 1px;
  width: 310px;
  height: 32px;
  display: flex;
  align-items: center;
  background: #f4f4f4;
  border-radius: 3px;
  box-shadow: 0 0 5px rgba(0, 0, 0, 0.6);
  padding-left: 10px;
`;
const FindInput = styled.div`
  width: 193px;
  height: 24px;
  margin: 0 0 0 6px;
  padding: 0 4px 0 3px;
  display: flex;
  align-items: center;
  background: #fff;
  border: 1px solid #a9a9a9;
  border-radius: 2px;
`;
const Count = styled.span`
  margin: 0 3px 0 auto;
  color: #777;
`;
const VScroll = styled.div`
  position: relative;
  width: 15px;
  background: #efefef;
  display: flex;
  flex-direction: column;
  justify-content: space-between;
  align-items: center;
  padding: 1px 0 2px;
`;
const Mark = styled.i<{ $y: number; $h: number }>`
  position: absolute;
  left: 1px;
  width: 8px;
  top: ${(p) => p.$y - 197}px;
  height: ${(p) => p.$h}px;
  background: #0a8cff;
`;
const VThumb = styled.i`
  position: absolute;
  right: 0;
  top: 456px;
  width: 5px;
  height: 30px;
  border-radius: 3px 0 0 3px;
  background: #858585;
`;
const HScroll = styled.div`
  height: 15px;
  display: flex;
  align-items: center;
  background: #efefef;
  padding-left: 2px;
`;
const HThumb = styled.i`
  width: 120px;
  height: 5px;
  margin-left: 232px;
  border-radius: 3px;
  background: #858585;
`;
const Status = styled.footer`
  height: 31px;
  display: flex;
  background: #f4f4f4;
`;
const StatusPart = styled.div<{ $w: number }>`
  flex: none;
  width: ${(p) => p.$w}px;
  height: 31px;
  display: flex;
  align-items: center;
`;
const Grip = styled.div<{ $l?: number; $r?: number }>`
  flex: none;
  width: 9px;
  margin-left: ${(p) => p.$l ?? 0}px;
  margin-right: ${(p) => p.$r ?? 0}px;
  display: flex;
  flex-direction: column;
  gap: 2px;
`;
const Options = styled.span`
  width: 53px;
  letter-spacing: -0.4px;
`;
const TwoLines = styled.div<{ $w: number; $l: number }>`
  width: ${(p) => p.$w}px;
  margin-left: ${(p) => p.$l}px;
  letter-spacing: -0.3px;
`;
const PageBox = styled.div`
  width: 96px;
  height: 23px;
  margin: 0 3px;
  display: flex;
  justify-content: flex-end;
  align-items: center;
  padding-right: 4px;
  background: #fafafa;
  border: 1px solid #bcbcbc;
  border-radius: 2px;
  color: #8a7a72;
`;
const Total = styled.sup`
  font-size: 11px;
  line-height: 10px;
  margin-bottom: 4px;
`;
const ModeButton = styled.div<{ $on?: boolean }>`
  flex: none;
  width: 28px;
  height: 28px;
  display: flex;
  align-items: center;
  justify-content: center;
  background: ${(p) => (p.$on ? "#e6d19e" : "transparent")};
  border: 1px solid ${(p) => (p.$on ? "#c4b288" : "transparent")};
  border-radius: 1px;
`;
const Overflow = styled.div`
  flex: none;
  width: 11px;
  height: 31px;
  margin-left: auto;
  background: #e6e6e6;
`;

const CollapseMark = () => (
  <I w={7} h={7}>
    <path d="M1 0V7M6.500 .5L3.500 3.500L6.500 6.500" stroke="#444" strokeWidth="1.400" />
  </I>
);
const StatusGrip = ({ l, r }: { l?: number; r?: number }) => (
  <Grip $l={l} $r={r}>
    <Dots $w={9} $h={15} />
    <CollapseMark />
  </Grip>
);

const tabs: [string, number][] = [
  ["View", 43], ["Comment", 72], ["Protect", 57], ["Form", 45], ["Organize", 65], ["Convert", 60],
  ["Share", 47], ["Review", 55], ["Accessibility", 83], ["Bookmarks", 77], ["Help", 43],
];
const sideTop = [BookmarkIcon, PagesIcon, NoteIcon, ClipIcon, FieldsIcon, SignatureIcon, LayersIcon, ContentIcon, PinsIcon, TreeIcon, LinkIcon];
const sideBottom = [TagIcon, OrderIcon, AccessIcon, AccessReportIcon];
const marks: [number, number][] = [
  [301, 2], [305, 1], [347, 1], [378, 1], [432, 1], [444, 1], [460, 3], [465, 1], [502, 1], [507, 1], [538, 1],
  [589, 1], [619, 3], [624, 1], [662, 1], [667, 1], [698, 1], [745, 1], [756, 1], [774, 1],
];

const PidDrawing = () => (
  <Drawing width="1872" height="787" viewBox="32 198 1872 787" fill="none">
    <rect x="429" y="190" width="43.500" height="800" fill="#000" />
    <rect x="652" y="190" width="43" height="800" fill="#000" />
    <rect x="876" y="553" width="183" height="77.500" rx="1" fill="#80eaff" stroke="#0a9fdc" strokeWidth="1.500" />
    <circle cx="964.300" cy="653" r="199" stroke="#000" strokeWidth="13" />
    <circle cx="1342.600" cy="728" r="105" stroke="#000" strokeWidth="13" />
    <path d="M1079 818L1199 990M1342.500 835V990" stroke="#000" strokeWidth="13" />
    <rect x="1288.500" y="881" width="108.500" height="13" fill="#000" />
    <DrawingText x="878" y="610.700" $size={120} textLength="173" lengthAdjust="spacingAndGlyphs">MV</DrawingText>
    <DrawingText x="848" y="779.300" $size={116} $alt>1</DrawingText>
    <DrawingText x="911.500" y="779.300" $size={120} textLength="127.500" lengthAdjust="spacingAndGlyphs">75</DrawingText>
    <DrawingText x="1041.500" y="779.300" $size={116} $alt>1</DrawingText>
    <DrawingText x="1319.500" y="749.300" $size={61.5} textLength="49.500" lengthAdjust="spacingAndGlyphs">M</DrawingText>
  </Drawing>
);

export default function App() {
  return (
    <Window>
      <GlobalStyle />
      <Top>
        <TopLeft>
          <QuickBar>
            <LogoIcon />
            <VRule $l={4} $r={3} />
            <FolderIcon /><Spacer $w={3} /><Chevron /><Spacer $w={3} />
            <SaveIcon /><Spacer $w={4} />
            <PrintIcon /><Spacer $w={4} />
            <MailIcon /><Spacer $w={3} /><Chevron /><Spacer $w={3} />
            <ScannerIcon /><Spacer $w={3} /><Chevron />
            <VRule $l={2} $r={3} />
            <UndoIcon c="#42a5f5" /><Spacer $w={3} /><Chevron /><Spacer $w={3} />
            <UndoIcon c="#93c7f0" flip /><Spacer $w={3} /><Chevron c="#999" />
            <VRule $l={2} $r={3} />
            <RoundIcon kind="left" /><Spacer $w={4} />
            <RoundIcon kind="right" off />
          </QuickBar>
          <TabRow>
            <Tab $w={55} $kind="file">File</Tab>
            <Tab $w={51} $kind="active">Home</Tab>
            {tabs.map(([name, w]) => (
              <Tab key={name} $w={w}>{name}</Tab>
            ))}
          </TabRow>
        </TopLeft>
        <ContextTab>
          <ContextName>Stamping Tools</ContextName>
          Format
        </ContextTab>
        <TitleText>131241-WSB01-DR-P-6011* - PDF-XChange Editor</TitleText>
        <TopRight>
          <TopRightRow>
            <QuickLaunch>
              <I w={12} h={13}>
                <circle cx="5" cy="5" r="4" stroke="#888" strokeWidth="1.200" />
                <path d="M8 8L12 12.500" stroke="#888" strokeWidth="1.600" />
              </I>
              Quick Launch (Ctrl+.)
            </QuickLaunch>
            <VRule $l={2} $r={3} />
            <UiOptionsIcon /><Spacer $w={3} /><Chevron />
            <VRule $l={2} $r={3} />
            <FullscreenIcon />
            <VRule $l={3} $r={15} $h={29} />
            <I w={14} h={12}><path d="M1 10H13" stroke="#000" strokeWidth="1.400" /></I>
            <Spacer $w={31} />
            <I w={12} h={12}><path d="M.5 3.500H8.500V11.500H.5ZM3.500 3.500V.5H11.500V8.500H8.500" stroke="#111" strokeWidth="1.200" /></I>
            <Spacer $w={33} />
            <Cross s={10} w={1.300} />
          </TopRightRow>
          <TopRightRow $second>
            <Spacer $w={195} />
            <FindButton $on $w={64}><FindIcon />Find...</FindButton>
            <Spacer $w={1} />
            <FindButton $w={80}><SearchFolderIcon />Search...</FindButton>
            <Spacer $w={7} />
            <Chevron d="up" />
          </TopRightRow>
        </TopRight>
      </Top>

      <Ribbon>
        <Group $w={268}>
          <GroupBody>
            <BigButton w={52} icon={<HandIcon />} lines={["Hand"]} />
            <BigButton w={53} icon={<SelectTextIcon />} lines={["Select", "Text"]} />
            <BigButton w={63} icon={<SelectCommentsIcon />} lines={["Select", "Comments"]} />
            <Column $l={2}>
              <SmallButton icon={<CameraIcon />} label="Snapshot" arrow />
              <SmallButton icon={<ClipboardIcon />} label="Clipboard" arrow />
              <SmallButton icon={<FindIcon />} label="Find" arrow />
            </Column>
          </GroupBody>
          <GroupName>Tools</GroupName>
        </Group>
        <Group $w={177}>
          <GroupBody>
            <Column $l={4}>
              <IconRow $gap={3}>
                <RoundIcon kind="minus" />
                <Combo $w={113}>902.41%<Chevron /></Combo>
                <RoundIcon kind="plus" />
              </IconRow>
              <IconRow $l={-1}>
                <ActualSizeIcon /><FitPageIcon /><FitWidthIcon /><FitVisibleIcon />
                <VRule $l={-1} $r={-2} /><RotateIcon /><RotateIcon flip />
              </IconRow>
              <IconRow $l={-1}>
                <BookmarkIcon /><PagesIcon /><NoteIcon /><ClipIcon /><ContentIcon />
                <VRule $l={0} $r={-2} /><ViewSettingsIcon />
              </IconRow>
            </Column>
          </GroupBody>
          <GroupName>View</GroupName>
        </Group>
        <Group $w={217}>
          <GroupBody>
            <BigButton w={54} icon={<EditTextIcon />} lines={["Edit", "Text"]} />
            <BigButton w={54} icon={<EditObjectsIcon />} lines={["Edit", "Objects"]} arrow="inline" />
            <BigButton w={54} icon={<AddIcon />} lines={["Add"]} arrow="below" />
            <BigButton w={50} icon={<SelectionIcon />} lines={["Selection"]} arrow="below" />
          </GroupBody>
          <GroupName>Objects</GroupName>
        </Group>
        <Group $w={269}>
          <GroupBody>
            <Column $l={4} $w={111}>
              <SmallButton icon={<TypewriterIcon />} label="Typewriter" corner />
              <SmallButton icon={<HighlightIcon />} label="Highlight Text" corner />
              <SmallButton icon={<UnderlineIcon />} label="Underline" corner />
            </Column>
            <Column $w={96}>
              <SmallButton icon={<StickyIcon />} label="Sticky Note" corner />
              <SmallButton icon={<ArrowIcon />} label="Arrow" corner />
              <SmallButton icon={<RectIcon />} label="Rectangle" corner />
            </Column>
            <VRule $h={84} $r={1} />
            <BigButton w={52} icon={<StampIcon />} lines={["Stamp"]} arrow="below" on />
          </GroupBody>
          <GroupName>Comment</GroupName>
        </Group>
        <Group $w={209}>
          <GroupBody>
            <BigButton w={54} icon={<BigLinkIcon />} lines={["Add/Edit", "Links"]} />
            <Column $l={2}>
              <SmallButton icon={<GlobeAddIcon />} label="Add Links to URLs" />
              <SmallButton icon={<GlobeRemoveIcon />} label="Remove All Web-Links" />
              <SmallButton icon={<QrIcon />} label="Add Links to Barcodes" />
            </Column>
          </GroupBody>
          <GroupName>Links</GroupName>
        </Group>
        <Group $w={66}>
          <GroupBody>
            <BigButton w={63} icon={<SignIcon />} lines={["Sign", "Document"]} />
          </GroupBody>
          <GroupName>Protect</GroupName>
        </Group>
      </Ribbon>

      <DocTabs>
        <DocTab>
          <DocTabTitle><span>131241-WSB01-DR-P-6011 <Dirty>*</Dirty></span><Cross s={6} w={1.600} /></DocTabTitle>
          <DocTabBar />
        </DocTab>
        <TabButton $w={27}><I s={15}><path d="M0 7.500H15M7.500 0V15" stroke="#222" strokeWidth="1.300" /></I></TabButton>
        <Spacer />
        <TabButton $w={30} $r={1}><Cross s={12} w={1.300} /></TabButton>
      </DocTabs>

      <Work>
        <Sidebar>
          <SidebarHead><CollapseMark /></SidebarHead>
          <Dots $w={26} $h={10} />
          {sideTop.map((Ic, i) => (
            <SidebarIcon key={i}><Ic /></SidebarIcon>
          ))}
          <SidebarRule />
          {sideBottom.map((Ic, i) => (
            <SidebarIcon key={i}><Ic /></SidebarIcon>
          ))}
        </Sidebar>
        <Main>
          <ViewRow>
            <Canvas>
              <PidDrawing />
              <FindBar>
                <Chevron />
                <FindInput>
                  MV<Count>3/26</Count><Cross s={10} c="#d0404a" w={1.400} /><Spacer $w={8} /><Chevron />
                </FindInput>
                <Spacer $w={5} /><Chevron d="left" />
                <Spacer $w={12} /><Chevron d="right" />
                <Spacer $w={16} />
                <I w={4} h={12}><path d="M.5 1H3.500V3.500H.5ZM.5 5H3.500V7.500H.5ZM.5 9H3.500V11.500H.5Z" fill="#222" /></I>
                <Spacer $w={16} /><Cross s={8} w={1.400} />
              </FindBar>
            </Canvas>
            <VScroll>
              <Chevron d="up" c="#777" />
              <Chevron c="#777" />
              {marks.map(([y, h]) => (
                <Mark key={y} $y={y} $h={h} />
              ))}
              <VThumb />
            </VScroll>
          </ViewRow>
          <HScroll>
            <Chevron d="left" c="#555" />
            <HThumb />
            <Spacer />
            <Chevron d="right" c="#555" />
            <Spacer $w={18} />
          </HScroll>
          <Status>
            <StatusPart $w={800}>
              <StatusGrip l={2} r={2} />
              <I>
                <Gear cx={8.500} cy={8} r={7.500} c="#8a8a8a" />
                <circle cx="17" cy="17" r="6.500" fill="#f4f4f4" />
                <Gear cx={17} cy={17} r={6.500} c="#fba428" />
              </I>
              <Spacer $w={4} />
              <Options>Options...</Options>
              <Spacer $w={3} /><Chevron />
              <VRule $l={2} $r={4} />
              <I w={16} h={16}>
                <path d="M1.500 14V3H14M11 .5L14.500 3L11 5.500M-.5 11L1.500 14.500L4 11" stroke="#666" strokeWidth="1.300" />
                <path d="M14 6V14.500H5" stroke="#777" strokeDasharray="1 1" />
              </I>
              <TwoLines $w={76} $l={0}>W: 841.00mm<br />H: 594.00mm</TwoLines>
              <VRule $l={1} $r={4} $h={22} $c="#ccc" />
              <I w={16} h={18}>
                <path d="M6.500 2V15M0 8.500H13" stroke="#666" strokeWidth="1.200" />
                <path d="M8 9L16 14.500L12 15L9.500 18Z" fill="#555" />
              </I>
              <TwoLines $w={20} $l={1}>X :<br />Y :</TwoLines>
            </StatusPart>
            <StatusPart $w={642}>
              <StatusGrip r={3} />
              <RoundIcon kind="first" off /><Spacer $w={4} />
              <RoundIcon kind="prev" off />
              <PageBox>
                1
                <I w={7} h={18}><path d="M1 17L6 1" stroke="#777" strokeWidth="1.200" /></I>
                <Total>1</Total>
              </PageBox>
              <RoundIcon kind="next" off /><Spacer $w={4} />
              <RoundIcon kind="last" off />
              <VRule $l={3} $r={3} />
              <RoundIcon kind="left" /><Spacer $w={4} />
              <RoundIcon kind="right" off />
            </StatusPart>
            <StatusPart $w={447}>
              <StatusGrip r={1} />
              <ModeButton><I><PageShape x={4.500} y={2} w={15} h={19} /></I></ModeButton>
              <ModeButton $on>
                <I>
                  <path d="M4.500 1V10.500H19.500V1" fill="#fff" stroke="#777" strokeWidth="1.200" />
                  <path d="M4.500 23V13.500H15L19.500 18V23Z" fill="#fff" stroke="#777" strokeWidth="1.200" />
                  <path d="M15 13L20.500 19L15.500 18Z" fill="#555" />
                </I>
              </ModeButton>
              <ModeButton>
                <I>
                  <path d="M.5 5.500H7L10.500 9V19.500H.5ZM7 5.500V9H10.500M13.500 5.500H20L23.500 9V19.500H13.500ZM20 5.500V9H23.500" fill="#f8f8f8" stroke="#b8b8b8" strokeWidth="1.100" />
                </I>
              </ModeButton>
              <ModeButton>
                <I>
                  <path d="M.5 1V10H10.500V1M13.500 1V10H23.500V1M.5 23V13.500H7L10.500 17V23M7 13.500V17H10.500M13.500 23V13.500H20L23.500 17V23M20 13.500V17H23.500" fill="#f8f8f8" stroke="#bcbcbc" strokeWidth="1.100" />
                </I>
              </ModeButton>
              <StatusGrip l={2} r={3} />
              <Combo $w={82}>902.41%<Chevron /></Combo>
              <VRule $l={1} $r={4} />
              <RoundIcon kind="minus" />
              <Spacer $w={4} />
              <I w={101} h={24}>
                <path d="M0 12H61M49 6V9M49 15V18" stroke="#909090" strokeWidth="2" />
                <path d="M80 12H100" stroke="#c2c2c2" strokeWidth="2.500" />
                <circle cx="70" cy="12" r="9" fill="#fff" stroke="#909090" strokeWidth="1.200" />
                <circle cx="70" cy="12" r="3.600" fill="#858585" />
              </I>
              <Spacer $w={3} />
              <RoundIcon kind="plus" />
              <StatusGrip l={5} r={4} />
              <I w={22} h={22}>
                <rect x="0" y="0" width="21.500" height="21.500" rx="3.500" fill="#b30b00" />
                <path d="M4.500 16.500Q3.500 15 9 13Q12 7 10.300 4.500Q8.800 5.500 11 10Q14 14 17 14Q18.500 12.500 13 12.500Q8 13 5.500 16Q4.800 17 4.500 16.500Z" stroke="#fff" strokeWidth="1.200" />
              </I>
              <Spacer $w={3} /><Chevron />
              <Overflow>
                <I w={11} h={10}>
                  <path d="M2.500 2.500L5.500 5.500L8.500 2.500M2 8.500H9" stroke="#666" strokeWidth="1.400" />
                </I>
              </Overflow>
            </StatusPart>
          </Status>
        </Main>
      </Work>
    </Window>
  );
}
